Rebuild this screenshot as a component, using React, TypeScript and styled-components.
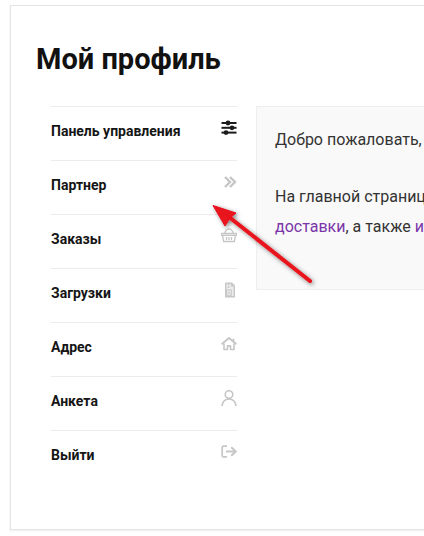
import React from 'react';
import styled, { createGlobalStyle } from 'styled-components';

const GlobalStyle = createGlobalStyle`
  html, body {
    margin: 0;
    width: 424px;
    height: 536px;
    overflow: hidden;
    background: #fff;
  }
  body {
    font-family: Roboto, "Liberation Sans", sans-serif;
    color: #111;
  }
`;

const Page = styled.div`
  position: relative;
  width: 424px;
  height: 536px;
  overflow: hidden;
  padding: 5px 0 0 10px;
  box-sizing: border-box;
`;

const Card = styled.main`
  box-sizing: border-box;
  width: 760px;
  height: 525px;
  padding: 28px 25px 0 25px;
  border: 1px solid #e4e4e4;
  box-shadow: 0 1px 2px rgba(0, 0, 0, 0.08);
  background: #fff;
`;

const Title = styled.h1`
  margin: 0 0 22px;
  font-size: 29px;
  line-height: 50px;
  font-weight: 700;
  color: #111;
`;

const Columns = styled.div`
  display: flex;
  align-items: flex-start;
  gap: 19px;
  padding-left: 15px;
`;

const Nav = styled.nav`
  flex: 0 0 186px;
  display: flex;
  flex-direction: column;
`;

const NavItem = styled.a`
  box-sizing: border-box;
  height: 54px;
  display: flex;
  justify-content: space-between;
  align-items: flex-start;
  padding-top: 14px;
  border-top: 1px solid #ececec;
  font-size: 14px;
  line-height: 20px;
  font-weight: 700;
  color: #151515;
`;

const IconSlot = styled.span<{ $dark?: boolean }>`
  width: 16px;
  height: 16px;
  margin-top: -1px;
  display: flex;
  color: ${p => (p.$dark ? '#1c1c1c' : '#c6c6c6')};
`;

const Panel = styled.section`
  box-sizing: border-box;
  width: 480px;
  height: 184px;
  padding: 18px;
  background: #f9f9f9;
  border: 1px solid #eeeeee;
  font-size: 16px;
  line-height: 30px;
  color: #333;
`;

const Line = styled.p<{ $gap?: boolean }>`
  margin: ${p => (p.$gap ? '27px 0 0' : '0')};
  white-space: nowrap;
`;

const PanelLink = styled.a`
  color: #7a35a8;
`;

const Arrow = styled.svg`
  position: absolute;
  left: 205px;
  top: 196px;
  width: 115px;
  height: 95px;
  overflow: visible;
`;

const Sliders = () => (
  <svg width="16" height="16" viewBox="0 0 16 16" fill="currentColor">
    <rect x="0.5" y="2" width="15" height="2" />
    <rect x="0.5" y="6.8" width="15" height="2" />
    <rect x="0.5" y="11.6" width="15" height="2" />
    <circle cx="7" cy="3" r="2.4" />
    <circle cx="11" cy="7.8" r="2.4" />
    <circle cx="5" cy="12.6" r="2.4" />
  </svg>
);

const DoubleAngle = () => (
  <svg width="16" height="16" viewBox="0 0 16 16" fill="none" stroke="currentColor" strokeWidth="2.4">
    <path d="M4 3l5 5-5 5" />
    <path d="M9 3l5 5-5 5" />
  </svg>
);

const Basket = () => (
  <svg width="16" height="16" viewBox="0 0 16 16" fill="none" stroke="currentColor" strokeWidth="1.3">
    <path d="M0.5 5.5h15v1.8h-15z" />
    <path d="M1.6 7.3l1 6.2h10.8l1-6.2" />
    <path d="M3.5 5.5C4.5 2.5 6 0.8 8 0.8s3.5 1.7 4.5 4.7" />
    <path d="M5.5 9v3M8 9v3M10.5 9v3" />
  </svg>
);

const Zipfile = () => (
  <svg width="16" height="16" viewBox="0 0 16 16" fill="currentColor">
    <path d="M4 0.5h7l3 3v12H4z" />
    <path fill="#ececec" d="M5.4 1.8h1.4v1.4h1.6v1.4H6.8V6h1.6v1.4H6.8v1h3v4.4H6.2V8.4h.6V7.4H5.4zM8.4 1.8h1.6v2.8h2.6v9.4H5.4v-.2h5.4V7.4H8.4z" />
    <path d="M7.2 10h1.6v1.6H7.2z" />
  </svg>
);

const Home = () => (
  <svg width="16" height="16" viewBox="0 0 16 16" fill="none" stroke="currentColor" strokeWidth="1.6" strokeLinejoin="round">
    <path d="M0.6 8.2L8 2l7.4 6.2" strokeWidth="1.9" />
    <path d="M12.4 5.6V2.8" strokeWidth="1.9" />
    <path d="M3 7.4v6.1h3.5v-3.6h3v3.6H13V7.4" />
  </svg>
);

const Person = () => (
  <svg width="16" height="16" viewBox="0 0 16 16" fill="none" stroke="currentColor" strokeWidth="1.6">
    <circle cx="8" cy="4.6" r="3.8" />
    <path d="M1 16c.6-4.4 3-7 7-7s6.4 2.6 7 7" />
  </svg>
);

const SignOut = () => (
  <svg width="16" height="16" viewBox="0 0 16 16" fill="none" stroke="currentColor" strokeWidth="1.7" strokeLinejoin="round">
    <path d="M6 2.2H2.6a1.4 1.4 0 0 0-1.4 1.4v7.8a1.4 1.4 0 0 0 1.4 1.4H6" />
    <path d="M5 7.5h8.5" strokeWidth="2" />
    <path d="M10.2 3.2l4.6 4.3-4.6 4.3" strokeWidth="2" />
  </svg>
);

const navItems = [
  { label: 'Панель управления', icon: <Sliders />, dark: true },
  { label: 'Партнер', icon: <DoubleAngle /> },
  { label: 'Заказы', icon: <Basket /> },
  { label: 'Загрузки', icon: <Zipfile /> },
  { label: 'Адрес', icon: <Home /> },
  { label: 'Анкета', icon: <Person /> },
  { label: 'Выйти', icon: <SignOut /> },
];

export default function App() {
  return (
    <Page>
      <GlobalStyle />
      <Card>
        <Title>Мой профиль</Title>
        <Columns>
          <Nav>
            {navItems.map(item => (
              <NavItem key={item.label}>
                {item.label}
                <IconSlot $dark={item.dark}>{item.icon}</IconSlot>
              </NavItem>
            ))}
          </Nav>
          <Panel>
            <Line>Добро пожаловать, Анна!</Line>
            <Line $gap>На главной странице аккаунта можно посмотреть заказы и способы</Line>
            <Line>
              <PanelLink>доставки</PanelLink>, а также <PanelLink>историю заказов</PanelLink>
            </Line>
          </Panel>
        </Columns>
      </Card>
      <Arrow viewBox="0 0 115 95">
        <defs>
          <filter id="arrowShadow" x="-20%" y="-20%" width="150%" height="150%">
            <feDropShadow dx="1.5" dy="1.5" stdDeviation="2" floodColor="#000" floodOpacity="0.5" />
          </filter>
        </defs>
        <g filter="url(#arrowShadow)" fill="#e8121b" stroke="#e8121b">
          <path d="M105 85L24 21" strokeWidth="4" strokeLinecap="round" fill="none" />
          <path d="M8 9.5L31 17L25 22L20 30Z" strokeWidth="1" strokeLinejoin="round" />
        </g>
      </Arrow>
    </Page>
  );
}
